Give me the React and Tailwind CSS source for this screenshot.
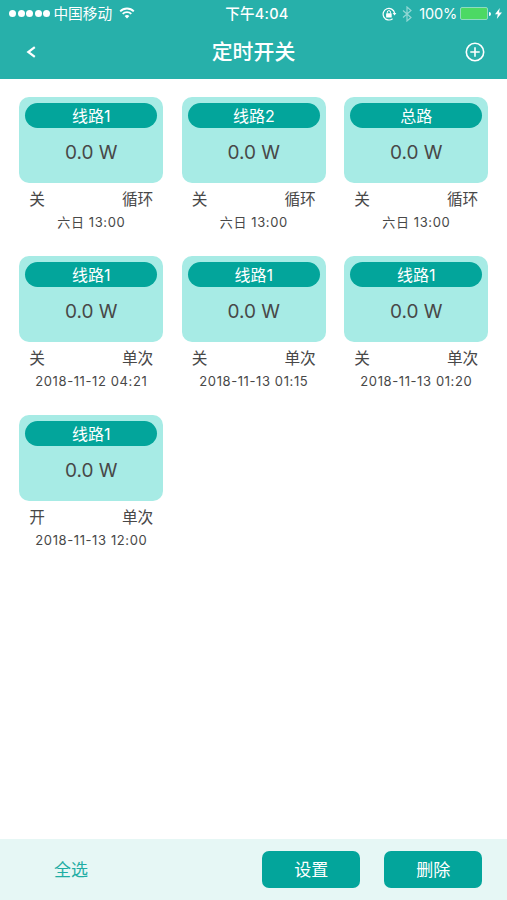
const timers = [
  { id: 1, name: '线路1', power: '0.0 W', state: '关', mode: '循环', time: '六日 13:00' },
  { id: 2, name: '线路2', power: '0.0 W', state: '关', mode: '循环', time: '六日 13:00' },
  { id: 3, name: '总路', power: '0.0 W', state: '关', mode: '循环', time: '六日 13:00' },
  { id: 4, name: '线路1', power: '0.0 W', state: '关', mode: '单次', time: '2018-11-12 04:21' },
  { id: 5, name: '线路1', power: '0.0 W', state: '关', mode: '单次', time: '2018-11-13 01:15' },
  { id: 6, name: '线路1', power: '0.0 W', state: '关', mode: '单次', time: '2018-11-13 01:20' },
  { id: 7, name: '线路1', power: '0.0 W', state: '开', mode: '单次', time: '2018-11-13 12:00' },
];

function WifiIcon() {
  return (
    <svg width="16" height="12" viewBox="0 0 16 12" fill="none" stroke="currentColor" strokeWidth="1.9">
      <path d="M1.2 4.3a9.6 9.6 0 0 1 13.6 0" />
      <path d="M3.7 6.9a6.1 6.1 0 0 1 8.6 0" />
      <path d="M8 11.6L5.6 9.1a3.4 3.4 0 0 1 4.8 0z" fill="currentColor" stroke="none" />
    </svg>
  );
}

function RotationLockIcon() {
  return (
    <svg width="15" height="14" viewBox="0 0 15 14" fill="none" stroke="currentColor">
      <path d="M10.6 11.7A5.8 5.8 0 1 1 12.6 6" strokeWidth="1.2" />
      <path d="M10.6 6h3.8l-1.9 2.6z" fill="currentColor" stroke="none" />
      <rect x="4.1" y="6.2" width="5.6" height="4.2" rx="0.5" fill="currentColor" stroke="none" />
      <path d="M5.3 6.4V5.2a1.6 1.6 0 0 1 3.2 0v1.2" strokeWidth="1" />
    </svg>
  );
}

function BluetoothIcon() {
  return (
    <svg width="10" height="16" viewBox="0 0 10 16" fill="none" stroke="currentColor" strokeWidth="1.2">
      <path d="M1 4.5l8 7L5 15V1l4 3.5-8 7" />
    </svg>
  );
}

function StatusBar() {
  return (
    <div className="grid h-[27px] grid-cols-[1fr_auto_1fr] items-center pr-[5px] pl-[9px] text-[14.5px] leading-none">
      <div className="flex items-center">
        <div className="flex gap-[1.6px]">
          {[1, 2, 3, 4, 5].map((dot) => (
            <span key={dot} className="size-[7px] rounded-full bg-white"></span>
          ))}
        </div>
        <span className="mr-[7px] ml-[3px] pt-[2px] text-[14.7px]">中国移动</span>
        <WifiIcon />
      </div>
      <span className="pt-[2px] pl-[3px] font-medium tracking-[0.25px]">下午4:04</span>
      <div className="flex items-center justify-end">
        <RotationLockIcon />
        <span className="mr-[7px] ml-[5px] opacity-50"><BluetoothIcon /></span>
        <span className="mr-[3px] pt-px tracking-[-0.2px]">100%</span>
        <span className="h-[13px] w-[28px] rounded-[2px] border border-[#8fdcc0] bg-[#4cd964]"></span>
        <span className="mr-[4px] ml-px h-[4px] w-[2px] rounded-r-full bg-white"></span>
        <svg width="7" height="11" viewBox="0 0 7 11" fill="currentColor">
          <path d="M4.8 0L0 6.2h2.8L1.8 11 7 4.5H4z" />
        </svg>
      </div>
    </div>
  );
}

function NavBar() {
  return (
    <div className="grid h-[50px] grid-cols-[1fr_auto_1fr] items-center pr-[22px] pl-[26px]">
      <button className="h-[20px] w-[10px]">
        <svg width="10" height="12" viewBox="0 0 10 12" fill="none" stroke="currentColor" strokeWidth="2.2">
          <path d="M8.8 1.2L2.3 6l6.5 4.8" />
        </svg>
      </button>
      <h1 className="mr-[4px] pt-px text-[20.9px] leading-none font-medium">定时开关</h1>
      <button className="justify-self-end">
        <svg width="20" height="20" viewBox="0 0 20 20" fill="none" stroke="currentColor" strokeWidth="1.6">
          <circle cx="10" cy="10" r="8.7" />
          <path d="M10 5.3v9.4M5.3 10h9.4" />
        </svg>
      </button>
    </div>
  );
}

function TimerCard({ timer }) {
  return (
    <div className="h-[159px] text-[#484848]">
      <div className="h-[86px] rounded-[10px] bg-[#a7ebe5] px-[6px] pt-[6px]">
        <div className="flex h-[25px] items-center justify-center rounded-full bg-[#03a59b] text-[16px] leading-none text-white">
          {timer.name}
        </div>
        <div className="pt-[15px] text-center text-[19px] leading-[20px]">{timer.power}</div>
      </div>
      <div className="flex justify-between px-[10px] pt-[7px] text-[15.7px] leading-[20px]">
        <span>{timer.state}</span>
        <span>{timer.mode}</span>
      </div>
      <div className="pt-[3px] text-center text-[13px] leading-[18px] tracking-[0.6px]">{timer.time}</div>
    </div>
  );
}

export default function App() {
  return (
    <div className="flex h-screen flex-col bg-white font-[Inter,'Noto_Sans_CJK_SC',sans-serif]">
      <header className="h-[79px] shrink-0 bg-[#27b0aa] text-white">
        <StatusBar />
        <NavBar />
      </header>

      <main className="flex-1 pt-[18px] pl-[19.3px]">
        <div className="grid grid-cols-[144px_144px_144px] gap-x-[18.5px]">
          {timers.map((timer) => (
            <TimerCard key={timer.id} timer={timer} />
          ))}
        </div>
      </main>

      <footer className="flex h-[61px] shrink-0 items-center bg-[#e6f7f5] pr-[24.8px] pl-[54px] text-[17px] leading-none">
        <button className="mr-auto pt-[2px] text-[#1fada4]">全选</button>
        <button className="mr-[24px] h-[37px] w-[98px] rounded-[7px] bg-[#03a59b] pt-[2px] text-white">设置</button>
        <button className="h-[37px] w-[98px] rounded-[7px] bg-[#03a59b] pt-[2px] text-white">删除</button>
      </footer>
    </div>
  );
}
